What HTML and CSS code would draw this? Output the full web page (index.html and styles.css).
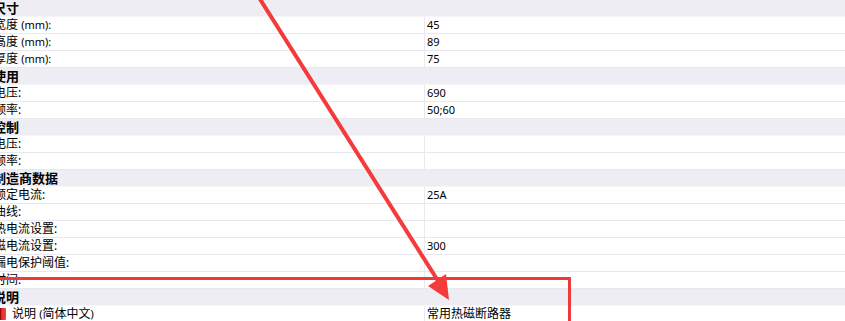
FILE: index.html
```html
<!DOCTYPE html>
<html lang="zh">
<head>
<meta charset="utf-8">
<title>属性</title>
<link rel="stylesheet" href="styles.css">
</head>
<body>
<div class="page">
  <div class="grid">
    <div class="cat"><span class="cat-name">尺寸</span></div>
    <div class="row"><div class="label">宽度 <span class="lat">(mm):</span></div><div class="value">45</div></div>
    <div class="row"><div class="label">高度 <span class="lat">(mm):</span></div><div class="value">89</div></div>
    <div class="row"><div class="label">厚度 <span class="lat">(mm):</span></div><div class="value">75</div></div>
    <div class="cat"><span class="cat-name">使用</span></div>
    <div class="row"><div class="label">电压:</div><div class="value">690</div></div>
    <div class="row"><div class="label">频率:</div><div class="value">50;60</div></div>
    <div class="cat"><span class="cat-name">控制</span></div>
    <div class="row"><div class="label">电压:</div><div class="value"></div></div>
    <div class="row"><div class="label">频率:</div><div class="value"></div></div>
    <div class="cat"><span class="cat-name">制造商数据</span></div>
    <div class="row"><div class="label">额定电流:</div><div class="value">25A</div></div>
    <div class="row"><div class="label">曲线:</div><div class="value"></div></div>
    <div class="row"><div class="label">热电流设置:</div><div class="value"></div></div>
    <div class="row"><div class="label">磁电流设置:</div><div class="value">300</div></div>
    <div class="row"><div class="label">漏电保护阈值:</div><div class="value"></div></div>
    <div class="row"><div class="label">时间:</div><div class="value"></div></div>
    <div class="cat"><span class="cat-name">说明</span></div>
    <div class="row"><div class="label label-icon"><span class="book"></span><span>说明 <span class="lat">(</span>简体中文<span class="lat">)</span></span></div><div class="value value-cjk">常用热磁断路器</div></div>
  </div>

  <div class="highlight"></div>

  <svg class="arrow" width="845" height="321" viewBox="0 0 845 321">
    <line x1="258" y1="-4" x2="440" y2="284" stroke="#f43a3a" stroke-width="4"/>
    <polygon points="449,300 428,286 446,274" fill="#f43a3a"/>
  </svg>
</div>
</body>
</html>
```

FILE: styles.css
```css
html, body {
  margin: 0;
  padding: 0;
  background: #ffffff;
}

.page {
  position: relative;
  width: 845px;
  height: 321px;
  overflow: hidden;
  font-family: "Segoe UI", "Noto Sans", "Noto Sans CJK SC", sans-serif;
  font-size: 12px;
  color: #000;
}

.grid {
  display: flex;
  flex-direction: column;
}

.cat {
  height: 16px;
  line-height: 16px;
  background: #ededf3;
  border-bottom: 1px solid #f6f6f9;
}

.cat-name {
  display: block;
  margin-left: -7px;
  font-weight: bold;
  font-size: 13px;
  white-space: nowrap;
  font-family: "Noto Sans CJK SC", sans-serif;
}

.row {
  display: grid;
  grid-template-columns: 424px 1fr;
  height: 16px;
  line-height: 16px;
  border-bottom: 1px solid #e8e8ee;
}

.label {
  margin-left: -6px;
  white-space: nowrap;
}

.lat {
  font-size: 11px;
}

.label-icon {
  display: flex;
  align-items: center;
  gap: 6px;
}

.book {
  display: block;
  flex: none;
  width: 9px;
  height: 12px;
  margin-left: 3px;
  background: linear-gradient(90deg, #8c0c0c 0, #8c0c0c 4px, #e52424 4px, #f24646 100%);
  border-radius: 1px;
}

.value {
  border-left: 1px solid #e8e8ee;
  padding-left: 2px;
  white-space: nowrap;
  font-size: 11px;
}

.value-cjk {
  font-size: 12px;
}

.highlight {
  position: absolute;
  left: -10px;
  top: 277px;
  width: 575px;
  height: 100px;
  border: 3px solid #ee3a3a;
}

.arrow {
  position: absolute;
  left: 0;
  top: 0;
}
```
